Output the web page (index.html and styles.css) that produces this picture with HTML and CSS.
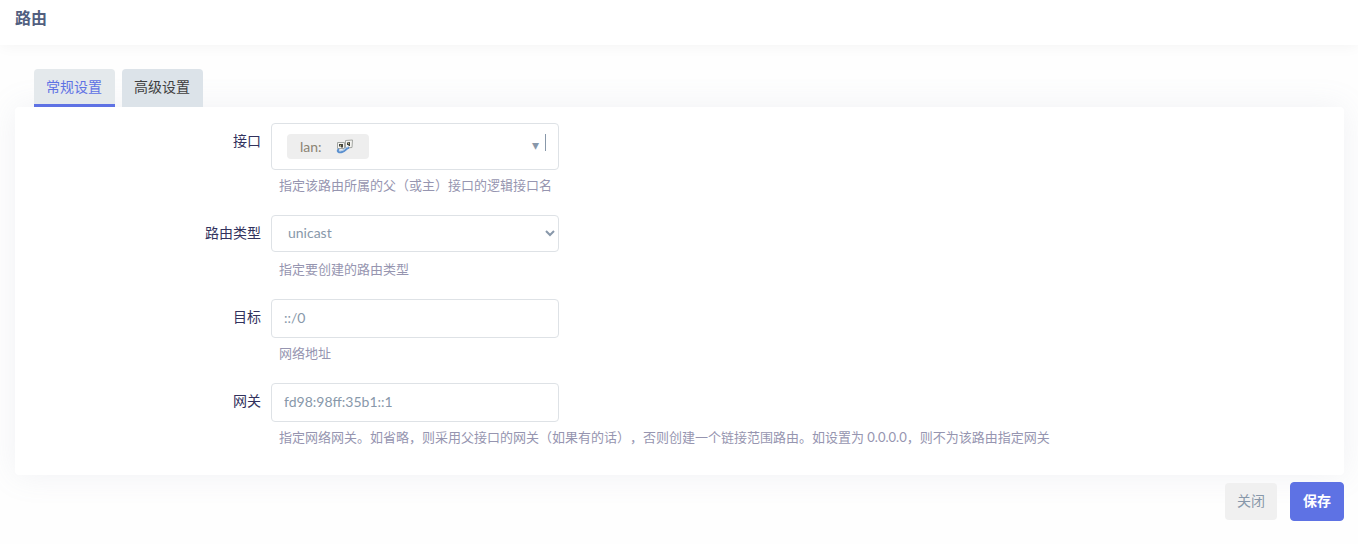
FILE: index.html
```html
<!DOCTYPE html>
<html lang="zh-CN">
<head>
    <meta charset="UTF-8">
    <meta name="viewport" content="width=device-width, initial-scale=1.0">
    <title>路由</title>
    <link rel="stylesheet" href="styles.css">
</head>
<body>
    <header class="page-header">
        <h4>路由</h4>
    </header>

    <main class="content">
        <ul class="tabs">
            <li class="tab active"><a href="#general">常规设置</a></li>
            <li class="tab"><a href="#advanced">高级设置</a></li>
        </ul>

        <form id="route-form" class="panel">
            <div class="form-row">
                <label for="interface">接口</label>
                <div class="field">
                    <button type="button" id="interface" class="control dropdown" aria-haspopup="listbox">
                        <span class="badge">
                            lan:
                            <svg width="17" height="16" viewBox="0 0 17 16" aria-hidden="true">
                                <path d="M1.5 3.5h7v6h-7z" fill="#f4f4f1" stroke="#a3a6a2"/>
                                <path d="M9.5 1.5l7-.5-.5 7.500-6.500.5z" fill="#f4f4f1" stroke="#a3a6a2"/>
                                <path d="M3 5h4v3.500H5V7.500H3z" fill="#45463f"/>
                                <path d="M11 3.500l3-.5v4h-1.500V6H11z" fill="#45463f"/>
                                <path d="M4 6h1v1H4zM12 4h1v1h-1z" fill="#b8b27a"/>
                                <path d="M3 10c-3 2 0 4 3 3 4-1 3-3 7-4.500" fill="none" stroke="#5b90cf" stroke-width="2"/>
                                <path d="M3 12c4 0 4-2 9-4" fill="none" stroke="#a9c9ec"/>
                            </svg>
                        </span>
                        <span class="arrow">▾</span>
                        <span class="caret"></span>
                    </button>
                    <p class="help">指定该路由所属的父（或主）接口的逻辑接口名</p>
                </div>
            </div>

            <div class="form-row">
                <label for="type">路由类型</label>
                <div class="field">
                    <select id="type" class="control">
                        <option>unicast</option>
                        <option>local</option>
                        <option>broadcast</option>
                        <option>multicast</option>
                    </select>
                    <p class="help">指定要创建的路由类型</p>
                </div>
            </div>

            <div class="form-row">
                <label for="target">目标</label>
                <div class="field">
                    <input type="text" id="target" class="control" value="::/0">
                    <p class="help">网络地址</p>
                </div>
            </div>

            <div class="form-row">
                <label for="gateway">网关</label>
                <div class="field">
                    <input type="text" id="gateway" class="control" value="fd98:98ff:35b1::1">
                    <p class="help">指定网络网关。如省略，则采用父接口的网关（如果有的话），否则创建一个链接范围路由。如设置为 0.0.0.0，则不为该路由指定网关</p>
                </div>
            </div>
        </form>

        <div class="actions">
            <button type="button" class="btn">关闭</button>
            <button type="submit" form="route-form" class="btn btn-save">保存</button>
        </div>
    </main>
</body>
</html>
```

FILE: styles.css
```css
* {
    box-sizing: border-box;
}

body {
    margin: 0;
    background: #fefefe;
    color: #32325d;
    font-family: Lato, "Noto Sans CJK SC", sans-serif;
    font-size: 14px;
    text-spacing-trim: space-all;
}

.page-header {
    padding: 6px 15px 15px;
    background: #fff;
    box-shadow: 0 0 16px rgba(0, 0, 0, 0.05);
}

.page-header h4 {
    margin: 0;
    color: #525f7f;
    font-size: 16px;
    font-weight: 700;
    line-height: 24px;
}

.content {
    padding: 24px 14px 16px 15px;
}

.tabs {
    display: flex;
    gap: 7px;
    margin: 0;
    padding: 0 19px;
    list-style: none;
}

.tab {
    height: 38px;
    border-radius: 4px 4px 0 0;
    background: #dce3e9;
}

.tab a {
    display: block;
    padding: 0 13px 0 12px;
    color: #404040;
    line-height: 36px;
    text-decoration: none;
}

.tab.active {
    border-bottom: 3px solid #5e72e4;
    background: #e4e9ec;
}

.tab.active a {
    color: #5e72e4;
}

.panel {
    padding: 16px 0 8px;
    border-radius: 4px;
    background: #fff;
    box-shadow: 0 0 32px rgba(136, 152, 170, 0.12);
}

.form-row {
    display: flex;
    gap: 10px;
}

.form-row label {
    flex: 0 0 246px;
    line-height: 36px;
    text-align: right;
}

.field {
    display: flex;
    flex: 1;
    flex-direction: column;
    align-items: flex-start;
    min-width: 0;
}

.control {
    width: 288px;
    max-width: 100%;
    height: 39px;
    padding: 0 12px 2px;
    border: 1px solid #dee2e6;
    border-radius: 4px;
    background: #fff;
    color: #8898aa;
    font-family: inherit;
    font-size: 14px;
    outline: none;
}

select.control {
    height: 37px;
    margin-bottom: 2px;
    padding-right: 0;
}

.dropdown {
    display: flex;
    align-items: center;
    height: 47px;
    padding: 0 12px 0 15px;
}

.badge {
    display: flex;
    align-items: center;
    gap: 14px;
    width: 82px;
    height: 25px;
    padding: 0 13px;
    border-radius: 4px;
    background: #eee;
    color: #8b8474;
}

.badge svg {
    flex: none;
}

.arrow {
    margin-left: auto;
    padding-bottom: 4px;
}

.caret {
    width: 1px;
    height: 17px;
    margin: 0 0 8px 6px;
    background: #8898aa;
}

.help {
    margin: 5px 0 20px;
    padding-left: 8px;
    color: #9695b0;
    font-size: 13px;
    line-height: 20px;
}

.actions {
    display: flex;
    align-items: center;
    justify-content: flex-end;
    gap: 13px;
    padding-top: 7px;
}

.btn {
    height: 37px;
    padding: 0 12px 3px;
    border: none;
    border-radius: 4px;
    background: #f0f0f0;
    color: #8898aa;
    font-family: inherit;
    font-size: 14px;
    cursor: pointer;
}

.btn-save {
    height: 39px;
    border: 1px solid #5e72e4;
    background: #5e72e4;
    color: #fff;
    font-weight: 700;
}
```
